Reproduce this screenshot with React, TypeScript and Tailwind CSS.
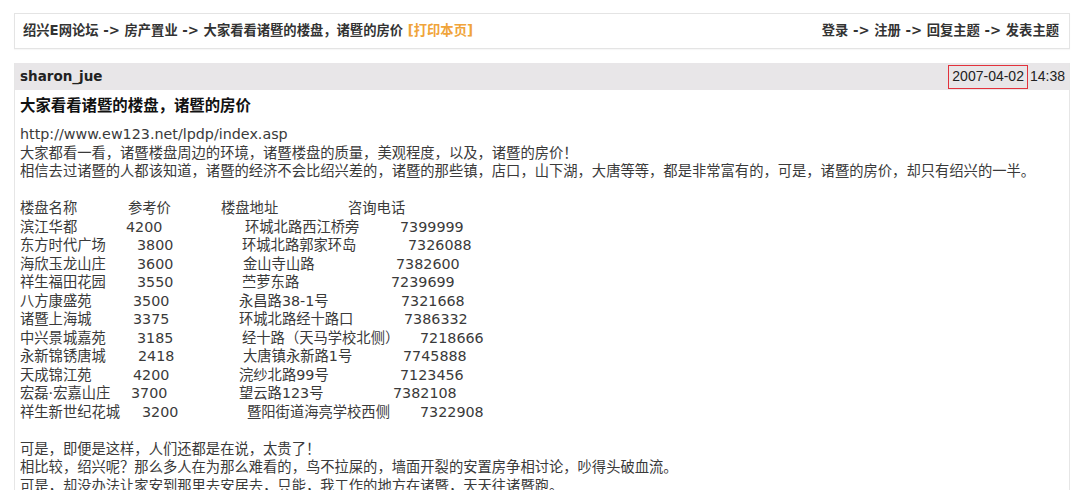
import React from "react";

type Cell = { t: string; c: string };

const rows: Cell[][] = [
  [
    { t: "楼盘名称", c: "w-[108px]" },
    { t: "参考价", c: "w-[93px]" },
    { t: "楼盘地址", c: "w-[127px]" },
    { t: "咨询电话", c: "" },
  ],
  [
    { t: "滨江华都", c: "w-[106px]" },
    { t: "4200", c: "w-[119px]" },
    { t: "环城北路西江桥旁", c: "w-[155px]" },
    { t: "7399999", c: "" },
  ],
  [
    { t: "东方时代广场", c: "w-[117px]" },
    { t: "3800", c: "w-[105px]" },
    { t: "环城北路郭家环岛", c: "w-[166px]" },
    { t: "7326088", c: "" },
  ],
  [
    { t: "海欣玉龙山庄", c: "w-[117px]" },
    { t: "3600", c: "w-[106px]" },
    { t: "金山寺山路", c: "w-[153px]" },
    { t: "7382600", c: "" },
  ],
  [
    { t: "祥生福田花园", c: "w-[117px]" },
    { t: "3550", c: "w-[105px]" },
    { t: "苎萝东路", c: "w-[149px]" },
    { t: "7239699", c: "" },
  ],
  [
    { t: "八方康盛苑", c: "w-[113px]" },
    { t: "3500", c: "w-[106px]" },
    { t: "永昌路38-1号", c: "w-[162px]" },
    { t: "7321668", c: "" },
  ],
  [
    { t: "诸暨上海城", c: "w-[113px]" },
    { t: "3375", c: "w-[106px]" },
    { t: "环城北路经十路口", c: "w-[165px]" },
    { t: "7386332", c: "" },
  ],
  [
    { t: "中兴景城嘉苑", c: "w-[117px]" },
    { t: "3185", c: "w-[105px]" },
    { t: "经十路（天马学校北侧）", c: "w-[178px]" },
    { t: "7218666", c: "" },
  ],
  [
    { t: "永新锦锈唐城", c: "w-[118px]" },
    { t: "2418", c: "w-[105px]" },
    { t: "大唐镇永新路1号", c: "w-[160px]" },
    { t: "7745888", c: "" },
  ],
  [
    { t: "天成锦江苑", c: "w-[113px]" },
    { t: "4200", c: "w-[106px]" },
    { t: "浣纱北路99号", c: "w-[161px]" },
    { t: "7123456", c: "" },
  ],
  [
    { t: "宏磊·宏嘉山庄", c: "w-[111px]" },
    { t: "3700", c: "w-[108px]" },
    { t: "望云路123号", c: "w-[154px]" },
    { t: "7382108", c: "" },
  ],
  [
    { t: "祥生新世纪花城", c: "w-[122px]" },
    { t: "3200", c: "w-[105px]" },
    { t: "暨阳街道海亮学校西侧", c: "w-[173px]" },
    { t: "7322908", c: "" },
  ],
];

export default function App() {
  return (
    <div
      className="w-[1080px] h-[490px] overflow-hidden bg-white pt-[13px] pl-[14px] pr-[10px]"
      style={{ fontFamily: '"DejaVu Sans", "Noto Sans CJK SC", sans-serif' }}
    >
      {/* top nav bar */}
      <div className="h-[36px] border border-[#e4e4e4] bg-white flex items-center justify-between pl-[8px] pr-[10px] text-[13.3px] font-bold text-[#333] shadow-[0_1px_1px_rgba(0,0,0,0.03)]">
        <div className="whitespace-pre">
          绍兴E网论坛 -&gt; 房产置业 -&gt; 大家看看诸暨的楼盘，诸暨的房价{" "}
          <span className="text-[#f0a43a]">[打印本页]</span>
        </div>
        <div className="whitespace-pre">登录 -&gt; 注册 -&gt; 回复主题 -&gt; 发表主题</div>
      </div>

      {/* post */}
      <div className="mt-[14px] border-x border-[#e6e6e6]">
        <div className="h-[27px] bg-[#e8e6e8] flex items-center justify-between pl-[5px] pr-[4px]">
          <span className="text-[13.5px] font-bold text-[#222]">sharon_jue</span>
          <div
            className="flex items-center text-[14px] text-[#222]"
            style={{ fontFamily: '"Liberation Sans", Arial, sans-serif' }}
          >
            <span className="h-[24px] flex items-center border-[1.5px] border-[#e2323c] px-[3px]">
              2007-04-02
            </span>
            <span className="ml-[2px]">14:38</span>
          </div>
        </div>

        <div className="pl-[5px] pb-[20px]">
          <div className="pt-[4px] h-[35px] leading-[24px] text-[15.4px] font-bold text-[#111]">
            大家看看诸暨的楼盘，诸暨的房价
          </div>
          <div className="text-[14.3px] leading-[18.5px] text-[#3a3a3a]">
            <div>http://www.ew123.net/lpdp/index.asp</div>
            <div>大家都看一看，诸暨楼盘周边的环境，诸暨楼盘的质量，美观程度，以及，诸暨的房价！</div>
            <div className="whitespace-nowrap">
              相信去过诸暨的人都该知道，诸暨的经济不会比绍兴差的，诸暨的那些镇，店口，山下湖，大唐等等，都是非常富有的，可是，诸暨的房价，却只有绍兴的一半。
            </div>
            <div className="h-[18.5px]" />
            {rows.map((r, i) => (
              <div key={i} className="flex whitespace-nowrap">
                {r.map((cell, j) => (
                  <span key={j} className={"shrink-0 " + cell.c}>
                    {cell.t}
                  </span>
                ))}
              </div>
            ))}
            <div className="h-[18.5px]" />
            <div>可是，即便是这样，人们还都是在说，太贵了！</div>
            <div>相比较，绍兴呢？那么多人在为那么难看的，鸟不拉屎的，墙面开裂的安置房争相讨论，吵得头破血流。</div>
            <div>可是，却没办法让家安到那里去安居去，只能，我工作的地方在诸暨，天天往诸暨跑。</div>
          </div>
        </div>
      </div>
    </div>
  );
}
